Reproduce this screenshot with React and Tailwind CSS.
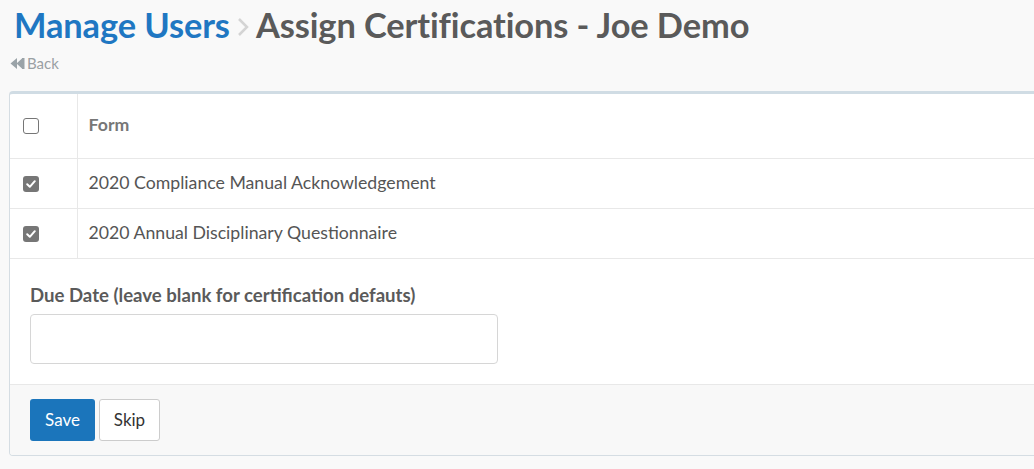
import React from "react";

const rows = [
  "2020 Compliance Manual Acknowledgement",
  "2020 Annual Disciplinary Questionnaire",
];

function Box({ checked }) {
  if (!checked) {
    return <span className="block w-[16px] h-[16px] rounded-[3px] border border-[#767676] bg-white" />;
  }
  return (
    <span className="flex items-center justify-center w-[16px] h-[16px] rounded-[3px] bg-[#767676]">
      <svg width="12" height="12" viewBox="0 0 12 12">
        <path d="M2.2 6.3 L4.8 8.8 L9.8 3.2" fill="none" stroke="white" strokeWidth="2" strokeLinecap="round" strokeLinejoin="round" />
      </svg>
    </span>
  );
}

export default function App() {
  return (
    <div
      className="min-h-[469px] bg-[#f9f9f9] overflow-hidden"
      style={{ fontFamily: "Lato, 'Open Sans', sans-serif" }}
    >
      <div className="pl-[14px] pt-[3px]">
        <h1 className="flex items-center text-[34.4px] font-bold leading-[44px] tracking-[-0.1px]">
          <span className="text-[#1f77c2]">Manage Users</span>
          <svg className="mx-[7px] mt-[3px]" width="12" height="20" viewBox="0 0 12 20">
            <path d="M2 2 L10 10 L2 18" fill="none" stroke="#d4d4d4" strokeWidth="2.5" />
          </svg>
          <span className="text-[#5a5a5a]">Assign Certifications - Joe Demo</span>
        </h1>
        <a className="mt-[5px] ml-[-4px] flex items-center gap-[2px] text-[15px] text-[#9aa0a4]">
          <svg width="15" height="13" viewBox="0 0 15 13">
            <path d="M0.5 6.5 L7 1 L7 12 Z M6.5 6.5 L12.5 1 L12.5 12 Z" fill="#9aa3a8" />
            <rect x="12" y="1" width="2.5" height="11" fill="#9aa3a8" />
          </svg>
          Back
        </a>
      </div>

      <div className="mt-[16px] ml-[9px] mr-[-10px] bg-white border border-[#d5dde3] border-t-[3px] border-t-[#d0dce4] rounded-[4px] overflow-hidden">
        <table className="w-full border-collapse text-[17.7px] text-[#555]">
          <thead>
            <tr className="h-[65px] border-b border-[#e8e8e8]">
              <th className="w-[67px] border-r border-[#e8e8e8] pl-[13px] text-left">
                <Box checked={false} />
              </th>
              <th className="pl-[11px] text-left font-bold text-[#777]">Form</th>
            </tr>
          </thead>
          <tbody>
            {rows.map((r) => (
              <tr key={r} className="h-[50px] border-b border-[#e8e8e8]">
                <td className="border-r border-[#e8e8e8] pl-[13px]">
                  <Box checked />
                </td>
                <td className="pl-[11px]">{r}</td>
              </tr>
            ))}
          </tbody>
        </table>

        <div className="px-[20px] pt-[25px] pb-[20px]">
          <label className="block text-[18.6px] font-bold text-[#5a5a5a] leading-[22px]">
            Due Date (leave blank for certification defauts)
          </label>
          <input className="mt-[8px] block w-[468px] h-[50px] rounded-[4px] border border-[#d6d6d6] bg-white" />
        </div>

        <div className="bg-[#f8f8f8] border-t border-[#e8e8e8] px-[20px] pt-[14px] pb-[14px] flex gap-[4px]">
          <button className="h-[42px] w-[65px] rounded-[3px] bg-[#1b75bb] text-white text-[17px]">Save</button>
          <button className="h-[42px] w-[61px] rounded-[3px] bg-white border border-[#cccccc] text-[#333] text-[17px]">Skip</button>
        </div>
      </div>
    </div>
  );
}
